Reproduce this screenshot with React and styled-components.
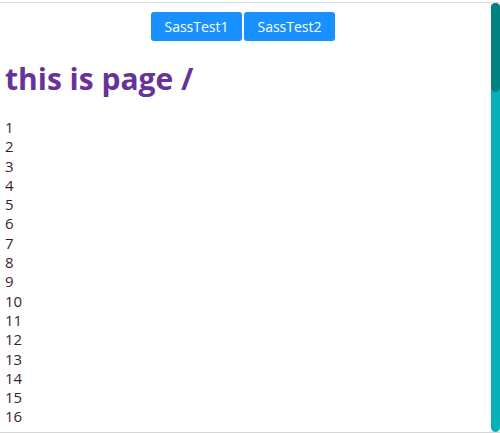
import React from "react";
import styled, { createGlobalStyle } from "styled-components";

const Global = createGlobalStyle`
  html, body { margin: 0; padding: 0; background: #fff; }
  body { font-family: "Open Sans", "Noto Sans", sans-serif; }
`;

const Frame = styled.div`
  margin-top: 2px;
  border-top: 1px solid #dedede;
  border-bottom: 1px solid #d6d6d6;
  height: 429px;
  width: 500px;
  display: flex;
`;

const Viewport = styled.div`
  flex: 1;
  min-width: 0;
  overflow: hidden;
`;

const ScrollTrack = styled.div`
  width: 9px;
  flex: none;
  background: #05b0bb;
  border-radius: 5px;
  display: flex;
  flex-direction: column;
`;

const ScrollThumb = styled.div`
  height: 89px;
  background: #028080;
  border-radius: 5px;
`;

const Nav = styled.nav`
  display: flex;
  justify-content: center;
  gap: 2px;
  padding-top: 9px;
  padding-right: 5px;
`;

const NavButton = styled.button`
  width: 91px;
  height: 29px;
  border: none;
  border-radius: 3px;
  background: #1890ff;
  color: #fff;
  font-family: "Open Sans", "Noto Sans", sans-serif;
  font-size: 14px;
  padding: 0;
  cursor: pointer;
`;

const Page = styled.main`
  padding-left: 5px;
`;

const Title = styled.h1`
  margin: 18px 0 19px;
  font-size: 30px;
  font-weight: 700;
  color: #663399;
  line-height: 40px;
`;

const Line = styled.div`
  font-size: 15px;
  line-height: 19.3px;
  color: #3a1f2b;
`;

export default function App() {
  const items = Array.from({ length: 17 }, (_, i) => i + 1);
  return (
    <>
      <Global />
      <Frame>
        <Viewport>
          <Nav>
            <NavButton>SassTest1</NavButton>
            <NavButton>SassTest2</NavButton>
          </Nav>
          <Page>
            <Title>this is page /</Title>
            {items.map((n) => (
              <Line key={n}>{n}</Line>
            ))}
          </Page>
        </Viewport>
        <ScrollTrack>
          <ScrollThumb />
        </ScrollTrack>
      </Frame>
    </>
  );
}
